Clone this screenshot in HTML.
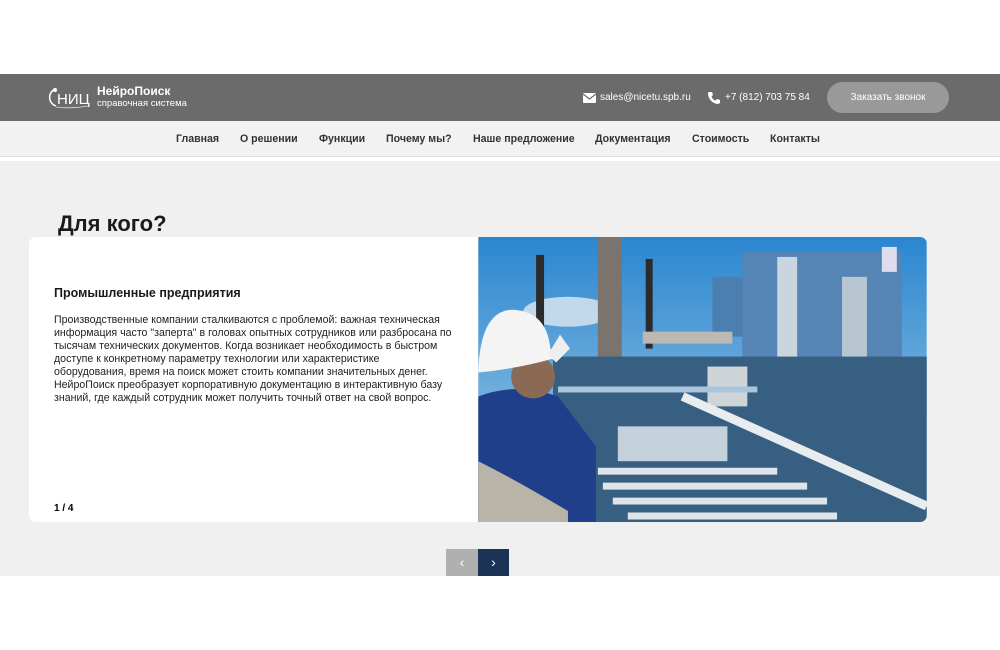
<!DOCTYPE html>
<html><head><meta charset="utf-8"><style>
*{margin:0;padding:0;box-sizing:border-box}
body{width:1000px;height:650px;background:#fff;font-family:"Liberation Sans",Arial,sans-serif;position:relative;overflow:hidden}
.hdr{position:absolute;top:74px;left:0;width:1000px;height:47px;background:#6b6b6b;color:#fff}
.nav{position:absolute;top:121px;left:0;width:1000px;height:36px;background:#f2f2f2;border-bottom:1px solid #ddd}
.nav span{position:absolute;top:12px;font-size:10.6px;font-weight:bold;color:#333}
.sec{position:absolute;top:161px;left:0;width:1000px;height:415px;background:#f0f0f0}
.card{position:absolute;top:237px;left:29px;width:898px;height:285px;background:#fff;border-radius:7px;overflow:hidden}
</style></head><body>
<div class="hdr">
 <svg style="position:absolute;left:46px;top:11px" width="46" height="26" viewBox="0 0 46 26"><path d="M10 4 C2 6 1 18 10 21" stroke="#fff" stroke-width="1.5" fill="none"/><circle cx="9" cy="5" r="2" fill="#fff"/><text x="11" y="19" fill="#fff" font-size="15" font-family="Liberation Sans">НИЦ</text><path d="M10 22 Q25 24 42 21" stroke="#ddd" stroke-width="0.8" fill="none"/></svg>
 <div style="position:absolute;left:97px;top:10px;font-size:12px;font-weight:bold">НейроПоиск</div>
 <div style="position:absolute;left:97px;top:24px;font-size:9.5px">справочная система</div>
 <svg style="position:absolute;left:583px;top:19px" width="13" height="10"><rect width="13" height="10" rx="1" fill="#fff"/><path d="M0 1 L6.5 6 L13 1" stroke="#6b6b6b" stroke-width="1.2" fill="none"/></svg>
 <div style="position:absolute;left:600px;top:18px;font-size:10px">sales@nicetu.spb.ru</div>
 <svg style="position:absolute;left:707px;top:17px" width="14" height="14" viewBox="0 0 14 14"><path d="M2 1 L5 1 L6 4 L4.5 5.5 Q6 9 8.5 9.5 L10 8 L13 9 L13 12 Q12 13 10 13 Q2 11 1 3 Q1 1 2 1Z" fill="#fff"/></svg>
 <div style="position:absolute;left:725px;top:18px;font-size:10px">+7 (812) 703 75 84</div>
 <div style="position:absolute;left:827px;top:8px;width:122px;height:31px;border-radius:16px;background:#999;font-size:10px;text-align:center;line-height:31px">Заказать звонок</div>
</div>
<div class="nav">
 <span style="left:176px">Главная</span><span style="left:240px">О решении</span><span style="left:319px">Функции</span><span style="left:386px">Почему мы?</span><span style="left:473px">Наше предложение</span><span style="left:595px">Документация</span><span style="left:692px">Стоимость</span><span style="left:770px">Контакты</span>
</div>
<div class="sec"></div>
<div style="position:absolute;left:58px;top:211px;font-size:22px;font-weight:bold;color:#1a1a1a">Для кого?</div>
<div class="card">
 <div style="position:absolute;left:25px;top:49px;font-size:12.5px;font-weight:bold;color:#1a1a1a">Промышленные предприятия</div>
 <div style="position:absolute;left:25px;top:77px;width:402px;font-size:10.6px;line-height:13px;color:#222">Производственные компании сталкиваются с проблемой: важная техническая информация часто "заперта" в головах опытных сотрудников или разбросана по тысячам технических документов. Когда возникает необходимость в быстром доступе к конкретному параметру технологии или характеристике<br>оборудования, время на поиск может стоить компании значительных денег. НейроПоиск преобразует корпоративную документацию в интерактивную базу знаний, где каждый сотрудник может получить точный ответ на свой вопрос.</div>
 <div style="position:absolute;left:25px;top:266px;font-size:10px;font-weight:bold">1 / 4</div>
 <svg style="position:absolute;left:449px;top:0" width="449" height="285" viewBox="0 0 450 286">
  <defs><linearGradient id="s" x1="0" y1="0" x2="0" y2="1"><stop offset="0" stop-color="#2a86d0"/><stop offset="1" stop-color="#a9cfe8"/></linearGradient></defs>
  <rect width="450" height="286" fill="url(#s)"/>
  <ellipse cx="90" cy="75" rx="45" ry="15" fill="#dfe9f1" opacity=".8"/>
  <rect x="58" y="18" width="8" height="110" fill="#2b2b2b"/>
  <rect x="120" y="0" width="24" height="125" fill="#7a736e"/>
  <rect x="168" y="22" width="7" height="90" fill="#2b2b2b"/>
  <rect x="235" y="40" width="35" height="60" fill="#4a7fb0"/>
  <rect x="265" y="15" width="160" height="220" fill="#5585b5"/>
  <rect x="300" y="20" width="20" height="170" fill="#c9d5df"/>
  <rect x="365" y="40" width="25" height="180" fill="#b8c6d2"/>
  <rect x="405" y="10" width="15" height="25" fill="#dde"/>
  <rect x="165" y="95" width="90" height="12" fill="#bdb9b2"/>
  <rect x="75" y="120" width="375" height="166" fill="#375f82"/>
  <rect x="230" y="130" width="40" height="40" fill="#cfd4d8"/>
  <rect x="80" y="150" width="200" height="6" fill="#a9c5dc"/>
  <rect x="140" y="190" width="110" height="35" fill="#c4d0da"/>
  <g stroke="#dfe4e8" stroke-width="7" fill="none">
   <path d="M120 235 H300"/><path d="M125 250 H330"/><path d="M135 265 H350"/><path d="M150 280 H360"/>
  </g>
  <path d="M205 160 L450 270" stroke="#e8ecef" stroke-width="9"/>
  <path d="M0 160 Q40 145 80 160 L118 210 L118 286 L0 286Z" fill="#1f3f8a"/>
  <path d="M0 225 Q40 245 90 275 L90 286 L0 286Z" fill="#b9b4a8"/>
  <ellipse cx="55" cy="140" rx="22" ry="22" fill="#8a6a55"/>
  <path d="M0 135 Q2 73 35 73 Q68 75 72 110 L75 122 Q40 132 0 136Z" fill="#f4f4f4"/>
  <path d="M70 118 L82 98 L92 112 L78 126Z" fill="#eee"/>
 </svg>
</div>
<div style="position:absolute;left:446px;top:549px;width:32px;height:27px;background:#b0b0b0;color:#fff;text-align:center;line-height:27px;font-size:14px">‹</div>
<div style="position:absolute;left:478px;top:549px;width:31px;height:27px;background:#1c3358;color:#fff;text-align:center;line-height:27px;font-size:14px">›</div>
</body></html>
